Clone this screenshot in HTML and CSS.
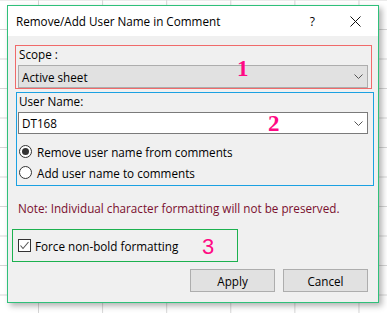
FILE: index.html
```html
<!DOCTYPE html>
<html lang="en">
<head>
  <meta charset="UTF-8">
  <title>Remove/Add User Name in Comment</title>
  <link rel="stylesheet" href="styles.css">
</head>
<body>
  <div class="dialog">
    <div class="titlebar">
      <span class="title">Remove/Add User Name in Comment</span>
      <span class="help">?</span>
      <svg class="close" width="11" height="11" viewBox="0 0 11 11">
        <path d="M0.5 0.5 L10.5 10.5 M10.5 0.5 L0.5 10.5" stroke="#111" stroke-width="1" fill="none"/>
      </svg>
    </div>

    <div class="content">
      <div class="box scope">
        <div class="label">Scope :</div>
        <div class="select">
          <span>Active sheet</span>
          <svg class="chev" width="9" height="5" viewBox="0 0 9 5">
            <path d="M0.5 0.5 L4.5 4.5 L8.5 0.5" stroke="#555" stroke-width="1" fill="none"/>
          </svg>
        </div>
      </div>

      <div class="box user">
        <div class="label">User Name:</div>
        <div class="select input">
          <span>DT168</span>
          <svg class="chev" width="9" height="5" viewBox="0 0 9 5">
            <path d="M0.5 0.5 L4.5 4.5 L8.5 0.5" stroke="#555" stroke-width="1" fill="none"/>
          </svg>
        </div>
        <div class="radio-row">
          <span class="radio on"></span>
          <span>Remove user name from comments</span>
        </div>
        <div class="radio-row">
          <span class="radio"></span>
          <span>Add user name to comments</span>
        </div>
      </div>

      <p class="note">Note: Individual character formatting will not be preserved.</p>

      <div class="box bold">
        <span class="check">
          <svg width="11" height="11" viewBox="0 0 11 11">
            <path d="M1.5 5.5 L4 8.5 L9.5 2" stroke="#555" stroke-width="1.1" fill="none"/>
          </svg>
        </span>
        <span>Force non-bold formatting</span>
      </div>

      <div class="buttons">
        <button class="btn">Apply</button>
        <button class="btn">Cancel</button>
      </div>
    </div>

    <span class="mark one">1</span>
    <span class="mark two">2</span>
    <span class="mark three">3</span>
  </div>
</body>
</html>
```

FILE: styles.css
```css
* {
  margin: 0;
  padding: 0;
  box-sizing: border-box;
}

body {
  width: 387px;
  height: 313px;
  overflow: hidden;
  position: relative;
  font-family: 'Open Sans', sans-serif;
  font-size: 11.7px;
  color: #000;
  background-color: #fff;
  background-image:
    linear-gradient(to right, #d6d6d6 1px, transparent 1px),
    linear-gradient(to bottom, #d6d6d6 1px, transparent 1px);
  background-size: 64.1px 100%, 100% 29.5px;
  background-position: 38px 0, 0 29px;
}

.dialog {
  position: absolute;
  left: 7px;
  top: 5px;
  width: 372px;
  height: 298px;
  border: 1px solid #2fc07a;
  background: #f0f0f0;
  box-shadow: 3px 3px 6px rgba(0, 0, 0, 0.3);
}

.titlebar {
  height: 30px;
  background: #fff;
  display: flex;
  align-items: center;
  padding-left: 8px;
}

.title {
  font-size: 11.7px;
  flex: 1;
}

.help {
  font-size: 12px;
  margin-right: 35px;
}

.close {
  margin-right: 17px;
}

.content {
  display: flex;
  flex-direction: column;
  align-items: flex-start;
}

.box {
  border: 1px solid;
}

.label {
  height: 19px;
  line-height: 17px;
  padding-left: 1px;
}

.scope {
  border-color: #f06a6a;
  margin: 9px 0 0 7px;
  width: 357px;
  height: 44px;
  padding: 0 3px 0 2px;
}

.select {
  height: 23px;
  border: 1px solid #adadad;
  background: #e1e1e1;
  display: flex;
  align-items: center;
  justify-content: space-between;
  padding: 0 4px 0 3px;
}

.input {
  height: 22px;
  border-color: #7a7a7a;
  background: #fff;
}

.user {
  border-color: #1ba1e2;
  margin: 3px 0 0 8px;
  width: 358px;
  height: 94px;
  padding: 0 5px 0 1px;
}

.radio-row {
  display: flex;
  align-items: center;
  gap: 5px;
  height: 21px;
  padding-left: 1px;
}

.user .label + .select + .radio-row {
  margin-top: 7px;
}

.radio {
  width: 13px;
  height: 13px;
  border: 1px solid #333;
  border-radius: 50%;
  background: #fff;
  display: flex;
  align-items: center;
  justify-content: center;
}

.radio.on::after {
  content: "";
  width: 7px;
  height: 7px;
  border-radius: 50%;
  background: #333;
}

.note {
  color: #7a0f2e;
  margin: 14px 0 0 10px;
  line-height: 16px;
}

.bold {
  border-color: #1cb14f;
  margin: 13px 0 0 4px;
  width: 226px;
  height: 33px;
  display: flex;
  align-items: center;
  gap: 4px;
  padding-left: 5px;
}

.check {
  width: 13px;
  height: 13px;
  border: 1px solid #333;
  background: #fff;
  display: flex;
  align-items: center;
  justify-content: center;
}

.buttons {
  align-self: flex-end;
  display: flex;
  gap: 8px;
  margin: 7px 10px 0 0;
}

.btn {
  width: 85px;
  height: 23px;
  border: 1px solid #adadad;
  background: #e1e1e1;
  font-family: 'Open Sans', sans-serif;
  font-size: 11.7px;
  color: #000;
}

.mark {
  position: absolute;
  color: #ff0a84;
  font-weight: bold;
  line-height: 1;
}

.one, .two {
  font-family: 'Liberation Serif', serif;
  font-size: 23px;
}

.one {
  left: 229px;
  top: 51px;
}

.two {
  left: 260px;
  top: 106px;
}

.three {
  font-family: 'Liberation Sans', sans-serif;
  font-weight: normal;
  font-size: 22px;
  left: 194px;
  top: 230px;
}
```
